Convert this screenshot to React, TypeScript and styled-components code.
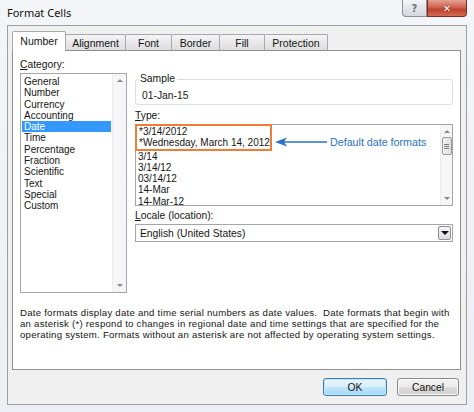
import styled, { createGlobalStyle } from 'styled-components';

const GlobalStyle = createGlobalStyle`
  body {
    margin: 0;
    font-family: 'Liberation Sans', Arial, sans-serif;
    color: #151515;
  }
`;

const categories = [
  'General',
  'Number',
  'Currency',
  'Accounting',
  'Date',
  'Time',
  'Percentage',
  'Fraction',
  'Scientific',
  'Text',
  'Special',
  'Custom',
];

const defaultTypes = ['*3/14/2012', '*Wednesday, March 14, 2012'];
const otherTypes = ['3/14', '3/14/12', '03/14/12', '14-Mar', '14-Mar-12'];

const tabs = [
  { label: 'Number', width: 54 },
  { label: 'Alignment', width: 61 },
  { label: 'Font', width: 47 },
  { label: 'Border', width: 49 },
  { label: 'Fill', width: 46 },
  { label: 'Protection', width: 64 },
];

export default function App() {
  return (
    <Window>
      <GlobalStyle />
      <TitleBar>
        <Title>Format Cells</Title>
        <Controls>
          <CaptionButton $variant='help'>?</CaptionButton>
          <CaptionButton $variant='close'>✕</CaptionButton>
        </Controls>
      </TitleBar>

      <Frame>
        <TabStrip>
          {tabs.map((t, i) => (
            <Tab key={t.label} $active={i === 0} $w={t.width}>
              {t.label}
            </Tab>
          ))}
        </TabStrip>

        <Panel>
          <Columns>
            <Column>
              <FieldLabel>
                <u>C</u>ategory:
              </FieldLabel>
              <ListBox $h={220}>
                <ListItems $pad={2}>
                  {categories.map((c) => (
                    <CategoryItem key={c} $selected={c === 'Date'}>
                      {c}
                    </CategoryItem>
                  ))}
                </ListItems>
                <ScrollBar>
                  <ScrollArrow $dir='up' />
                  <ScrollArrow $dir='down' />
                </ScrollBar>
              </ListBox>
            </Column>

            <RightColumn>
              <Group>
                <Legend>Sample</Legend>
                <SampleValue>01-Jan-15</SampleValue>
              </Group>

              <FieldLabel $gap={5}>
                <u>T</u>ype:
              </FieldLabel>
              <ListBox $h={82}>
                <ListItems $pad={0}>
                  <Highlight>
                    {defaultTypes.map((t) => (
                      <TypeItem key={t}>{t}</TypeItem>
                    ))}
                  </Highlight>
                  {otherTypes.map((t) => (
                    <TypeItem key={t}>{t}</TypeItem>
                  ))}
                </ListItems>
                <ScrollBar $narrow>
                  <ScrollArrow $dir='up' />
                  <Thumb>
                    <Grip />
                  </Thumb>
                  <ScrollArrow $dir='down' />
                </ScrollBar>
                <Callout>
                  <svg width='52' height='10' viewBox='0 0 52 10'>
                    <path d='M0 5 L12 0.5 L9 5 L12 9.5 Z' fill='#2a72c8' />
                    <line x1='8' y1='5' x2='52' y2='5' stroke='#2a72c8' strokeWidth='1.6' />
                  </svg>
                  <CalloutText>Default date formats</CalloutText>
                </Callout>
              </ListBox>

              <FieldLabel $gap={4}>
                <u>L</u>ocale (location):
              </FieldLabel>
              <Dropdown>
                <span>English (United States)</span>
                <DropButton>
                  <Arrow $dir='down' />
                </DropButton>
              </Dropdown>
            </RightColumn>
          </Columns>

          <Description>
            Date formats display date and time serial numbers as date values.&nbsp; Date
            formats that begin with
            <br />
            an asterisk (*) respond to changes in regional date and time settings that are
            specified for the
            <br />
            operating system. Formats without an asterisk are not affected by operating
            system settings.
          </Description>
        </Panel>

        <Footer>
          <Button $primary>OK</Button>
          <Button>Cancel</Button>
        </Footer>
      </Frame>
    </Window>
  );
}

const FONT_SIZE = '10px';
const LINE = '11.3px';

const Window = styled.div`
  width: 474px;
  height: 412px;
  display: flex;
  flex-direction: column;
  background: linear-gradient(180deg, #f3f5f8 0%, #eceff3 100%);
  overflow: hidden;
`;

const TitleBar = styled.div`
  height: 25px;
  display: flex;
  align-items: flex-start;
  padding-left: 7px;
`;

const Title = styled.div`
  font-family: 'Noto Sans', 'Open Sans', sans-serif;
  font-size: 11px;
  line-height: 25px;
  color: #111;
`;

const Controls = styled.div`
  margin-left: auto;
  margin-right: 7px;
  display: flex;
`;

const CaptionButton = styled.div<{ $variant: 'help' | 'close' }>`
  height: 17px;
  width: ${(p) => (p.$variant === 'help' ? '25px' : '40px')};
  box-sizing: border-box;
  display: flex;
  align-items: center;
  justify-content: center;
  font-family: 'DejaVu Sans', sans-serif;
  font-size: 10px;
  font-weight: bold;
  border: 1px solid ${(p) => (p.$variant === 'help' ? '#8c8f94' : '#7a2e24')};
  border-top: none;
  border-radius: ${(p) => (p.$variant === 'help' ? '0 0 0 4px' : '0 0 4px 0')};
  color: ${(p) => (p.$variant === 'help' ? '#6e7278' : '#fff')};
  background: ${(p) =>
    p.$variant === 'help'
      ? 'linear-gradient(180deg, #f4f5f7 0%, #e2e5e9 50%, #d3d7dc 100%)'
      : 'linear-gradient(180deg, #e4a294 0%, #d0624f 45%, #c0412e 60%, #d36a52 100%)'};
  text-shadow: ${(p) => (p.$variant === 'close' ? '0 0 2px #6a1d12' : 'none')};
`;

const Frame = styled.div`
  margin: 0 7px;
  height: 380px;
  box-sizing: border-box;
  border: 1px solid #9b9ea3;
  background: #f0f0f0;
  padding: 6px 5px 0 4px;
  display: flex;
  flex-direction: column;
`;

const TabStrip = styled.div`
  display: flex;
  align-items: flex-end;
  height: 19px;
  margin-bottom: -1px;
  position: relative;
  z-index: 1;
`;

const Tab = styled.div<{ $active?: boolean; $w: number }>`
  width: ${(p) => p.$w}px;
  height: ${(p) => (p.$active ? '20px' : '17px')};
  box-sizing: border-box;
  margin-left: -1px;
  &:first-child {
    margin-left: 0;
  }
  display: flex;
  align-items: center;
  justify-content: center;
  padding-bottom: ${(p) => (p.$active ? '2px' : '0')};
  font-size: 10.5px;
  border: 1px solid #a6a9ad;
  border-bottom: ${(p) => (p.$active ? 'none' : '1px solid #8e8f8f')};
  border-radius: 2px 2px 0 0;
  background: ${(p) =>
    p.$active ? '#fff' : 'linear-gradient(180deg, #f5f5f5 0%, #e8e8e8 50%, #dedede 100%)'};
  position: relative;
  z-index: ${(p) => (p.$active ? 2 : 1)};
`;

const Panel = styled.div`
  height: 320px;
  box-sizing: border-box;
  background: #fff;
  border: 1px solid #8e8f8f;
  padding: 8px 7px 0 7px;
  display: flex;
  flex-direction: column;
`;

const Columns = styled.div`
  display: grid;
  grid-template-columns: 107px 1fr;
  column-gap: 8px;
`;

const Column = styled.div`
  display: flex;
  flex-direction: column;
`;

const RightColumn = styled(Column)`
  padding-top: 14px;
`;

const FieldLabel = styled.div<{ $gap?: number }>`
  font-size: 10.3px;
  line-height: 12px;
  margin-top: ${(p) => p.$gap ?? 0}px;
  margin-bottom: 2px;
  u {
    text-decoration-thickness: 1px;
    text-underline-offset: 1px;
  }
`;

const ListBox = styled.div<{ $h: number }>`
  position: relative;
  height: ${(p) => p.$h}px;
  box-sizing: border-box;
  border: 1px solid #a3a6ab;
  display: flex;
  background: #fff;
`;

const ListItems = styled.div<{ $pad: number }>`
  flex: 1;
  padding-top: ${(p) => p.$pad}px;
  display: flex;
  flex-direction: column;
  align-items: flex-start;
`;

const CategoryItem = styled.div<{ $selected?: boolean }>`
  align-self: stretch;
  margin: 0 1px;
  padding-left: 2px;
  font-size: ${FONT_SIZE};
  line-height: ${LINE};
  background: ${(p) => (p.$selected ? '#3399ff' : 'transparent')};
  color: ${(p) => (p.$selected ? '#fff' : 'inherit')};
`;

const TypeItem = styled.div`
  padding-left: 2px;
  font-size: ${FONT_SIZE};
  line-height: ${LINE};
  white-space: nowrap;
`;

const Highlight = styled.div`
  width: 137px;
  box-sizing: border-box;
  margin: -1px 0 0 -1px;
  border: 2px solid #ef7d3a;
`;

const ScrollBar = styled.div<{ $narrow?: boolean }>`
  width: ${(p) => (p.$narrow ? '12px' : '14px')};
  background: #f6f6f6;
  border-left: 1px solid #ececec;
  display: flex;
  flex-direction: column;
  align-items: center;
  justify-content: space-between;
  padding: 5px 0;
  box-sizing: border-box;
`;

const ScrollArrow = styled.div<{ $dir: 'up' | 'down' }>`
  width: 0;
  height: 0;
  border-left: 3px solid transparent;
  border-right: 3px solid transparent;
  ${(p) => (p.$dir === 'up' ? 'border-bottom: 3px solid #8a8a8a;' : 'border-top: 3px solid #8a8a8a;')}
`;

const Arrow = styled(ScrollArrow)`
  border-left-width: 4px;
  border-right-width: 4px;
  border-top-width: 4px;
  border-top-color: #111;
`;

const Thumb = styled.div`
  width: 10px;
  height: 18px;
  margin-top: 4px;
  margin-bottom: auto;
  box-sizing: border-box;
  border: 1px solid #9a9a9a;
  border-radius: 2px;
  background: linear-gradient(90deg, #f4f4f4, #dedede);
  display: flex;
  align-items: center;
  justify-content: center;
`;

const Grip = styled.div`
  width: 5px;
  height: 5px;
  border-top: 1px solid #777;
  border-bottom: 1px solid #777;
  box-sizing: border-box;
  background: linear-gradient(#777, #777) center / 100% 1px no-repeat;
`;

const Callout = styled.div`
  position: absolute;
  left: 139px;
  top: 11px;
  display: flex;
  align-items: center;
  gap: 3px;
`;

const CalloutText = styled.span`
  font-size: 10.7px;
  color: #2a72c8;
  white-space: nowrap;
`;

const Group = styled.fieldset`
  margin: 0;
  padding: 5px 4px 2px 2px;
  border: 1px solid #d9dee3;
  border-radius: 3px;
  min-width: 0;
`;

const Legend = styled.legend`
  padding: 0 2px;
  margin-left: 0;
  font-size: 10.3px;
  line-height: 12px;
`;

const SampleValue = styled.div`
  font-size: 10.3px;
  line-height: 12px;
  padding-left: 4px;
`;

const Dropdown = styled.div`
  height: 18px;
  box-sizing: border-box;
  border: 1px solid #a3a6ab;
  display: flex;
  align-items: center;
  padding: 0 1px 0 4px;
  font-size: 10.3px;
  span {
    flex: 1;
  }
`;

const DropButton = styled.div`
  width: 13px;
  height: 14px;
  box-sizing: border-box;
  border: 1px solid #8d9095;
  border-radius: 2px;
  background: linear-gradient(180deg, #f5f5f5 0%, #dcdcdc 100%);
  display: flex;
  align-items: center;
  justify-content: center;
`;

const Description = styled.p`
  margin: 15px 0 0;
  font-size: 9.6px;
  line-height: 10.8px;
  letter-spacing: 0.25px;
  white-space: nowrap;
`;

const Footer = styled.div`
  display: flex;
  justify-content: flex-end;
  gap: 10px;
  padding: 8px 2px 0 0;
`;

const Button = styled.div<{ $primary?: boolean }>`
  width: ${(p) => (p.$primary ? '64px' : '62px')};
  height: 18px;
  box-sizing: border-box;
  display: flex;
  align-items: center;
  justify-content: center;
  font-size: 10.3px;
  border-radius: 3px;
  border: 1px solid ${(p) => (p.$primary ? '#3c7fb1' : '#8a8a8a')};
  box-shadow: inset 0 0 0 1px ${(p) => (p.$primary ? '#c4e5f6' : '#fbfbfb')};
  background: ${(p) =>
    p.$primary
      ? 'linear-gradient(180deg, #e8f5fc 0%, #d9effa 50%, #bee6fd 51%, #a7d9f5 100%)'
      : 'linear-gradient(180deg, #f2f2f2 0%, #ebebeb 50%, #dddddd 51%, #cfcfcf 100%)'};
`;
